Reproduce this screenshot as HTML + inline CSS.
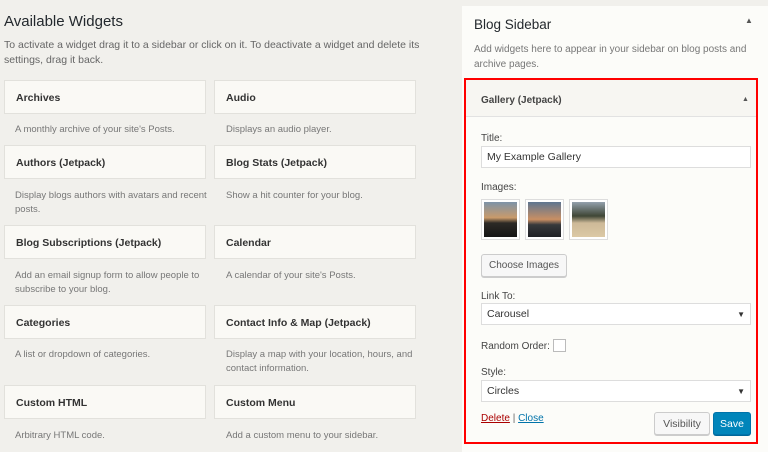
<!DOCTYPE html><html><head><style>
*{box-sizing:border-box;margin:0;padding:0}
body{width:768px;height:452px;overflow:hidden;background:#f1f0ec;font-family:"Liberation Sans",sans-serif;position:relative;color:#23282d}
.a{position:absolute}
h1{position:absolute;left:4px;top:13px;font-size:15px;font-weight:normal;color:#23282d}
.p{font-size:10.5px;color:#666}
.w{position:absolute;width:202px;height:34px;background:#faf9f5;border:1px solid #e2e1dc;font-size:10.5px;font-weight:bold;color:#333;padding:11px 11px}
.d{position:absolute;font-size:9.5px;color:#777;line-height:14px;width:200px}
.lab{position:absolute;left:481px;font-size:10px;color:#444}
.in{position:absolute;left:481px;width:270px;height:22px;border:1px solid #ddd;background:#fff;font-size:10.5px;color:#333;padding:4px 5px}
.btn{position:absolute;border:1px solid #ccc;background:#f7f7f7;border-radius:3px;font-size:10px;color:#555;text-align:center;box-shadow:0 1px 0 #ccc}
.th{position:absolute;top:199px;width:39px;height:41px;border:1px solid #ddd;background:#fff;padding:2px}
</style></head><body>
<h1>Available Widgets</h1>
<div class="a p" style="left:4px;top:38px;width:420px;line-height:15px">To activate a widget drag it to a sidebar or click on it. To deactivate a widget and delete its settings, drag it back.</div>

<div class="w" style="left:4px;top:80px">Archives</div><div class="w" style="left:214px;top:80px">Audio</div>
<div class="d" style="left:15px;top:123px">A monthly archive of your site's Posts.</div><div class="d" style="left:226px;top:123px">Displays an audio player.</div>
<div class="w" style="left:4px;top:145px">Authors (Jetpack)</div><div class="w" style="left:214px;top:145px">Blog Stats (Jetpack)</div>
<div class="d" style="left:15px;top:189px">Display blogs authors with avatars and recent posts.</div><div class="d" style="left:226px;top:189px">Show a hit counter for your blog.</div>
<div class="w" style="left:4px;top:225px">Blog Subscriptions (Jetpack)</div><div class="w" style="left:214px;top:225px">Calendar</div>
<div class="d" style="left:15px;top:269px">Add an email signup form to allow people to subscribe to your blog.</div><div class="d" style="left:226px;top:269px">A calendar of your site's Posts.</div>
<div class="w" style="left:4px;top:305px">Categories</div><div class="w" style="left:214px;top:305px">Contact Info &amp; Map (Jetpack)</div>
<div class="d" style="left:15px;top:348px">A list or dropdown of categories.</div><div class="d" style="left:226px;top:348px">Display a map with your location, hours, and contact information.</div>
<div class="w" style="left:4px;top:385px">Custom HTML</div><div class="w" style="left:214px;top:385px">Custom Menu</div>
<div class="d" style="left:15px;top:429px">Arbitrary HTML code.</div><div class="d" style="left:226px;top:429px">Add a custom menu to your sidebar.</div>

<div class="a" style="left:462px;top:6px;width:306px;height:446px;background:#fcfcf9"></div>
<div class="a" style="left:474px;top:17px;font-size:13.5px;color:#23282d">Blog Sidebar</div>
<div class="a" style="left:745px;top:16px;font-size:8px;color:#555">▲</div>
<div class="a p" style="left:474px;top:42px;width:285px;line-height:15px;font-size:10px;color:#777">Add widgets here to appear in your sidebar on blog posts and archive pages.</div>
<div class="a" style="left:464px;top:78px;width:294px;height:366px;border:2px solid #f00;background:#fcfcf9"></div>
<div class="a" style="left:466px;top:80px;width:290px;height:37px;background:#f7f6f2;border-bottom:1px solid #e2e2e2"></div>
<div class="a" style="left:481px;top:95px;font-size:10px;font-weight:bold;color:#444">Gallery (Jetpack)</div>
<div class="a" style="left:742px;top:96px;font-size:7px;color:#555">▲</div>
<div class="lab" style="top:133px">Title:</div>
<div class="in" style="top:146px">My Example Gallery</div>
<div class="lab" style="top:182px">Images:</div>
<div class="th" style="left:481px"><div style="width:100%;height:100%;background:linear-gradient(#7d93a8,#c99a6a 45%,#2d2a26 60%,#151515)"></div></div>
<div class="th" style="left:525px"><div style="width:100%;height:100%;background:linear-gradient(#5e7590,#c98f63 50%,#38393c 65%,#1f2024)"></div></div>
<div class="th" style="left:569px"><div style="width:100%;height:100%;background:linear-gradient(#93a0ac,#3f4636 40%,#cdb998 60%,#dcc9a5)"></div></div>
<div class="btn" style="left:481px;top:254px;width:86px;height:23px;padding-top:5px">Choose Images</div>
<div class="lab" style="top:291px">Link To:</div>
<div class="in" style="top:303px">Carousel<span style="float:right;font-size:8px;margin-top:2px">▼</span></div>
<div class="lab" style="top:341px">Random Order:</div>
<div class="a" style="left:553px;top:339px;width:13px;height:13px;border:1px solid #bbb;background:#fff"></div>
<div class="lab" style="top:367px">Style:</div>
<div class="in" style="top:380px">Circles<span style="float:right;font-size:8px;margin-top:2px">▼</span></div>
<div class="a" style="left:481px;top:413px;font-size:10px;color:#a00"><u>Delete</u> <span style="color:#666">|</span> <u style="color:#0073aa">Close</u></div>
<div class="btn" style="left:654px;top:412px;width:56px;height:23px;padding-top:5px;font-size:10.5px">Visibility</div>
<div class="btn" style="left:713px;top:412px;width:38px;height:23px;padding-top:5px;background:#0085ba;border-color:#0073aa;color:#fff;box-shadow:0 1px 0 #006799;font-size:10.5px">Save</div>
</body></html>
